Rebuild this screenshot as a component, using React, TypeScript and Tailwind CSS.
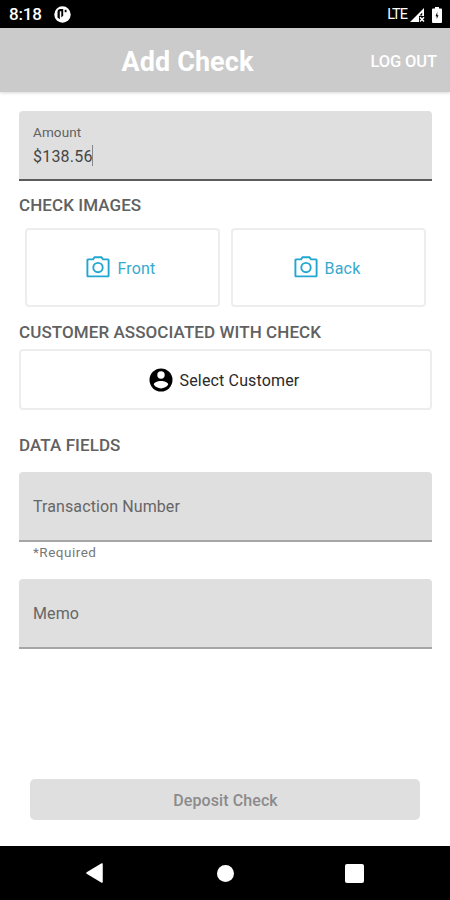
import type { ReactNode } from "react";

function StatusBar() {
  return (
    <div className="flex h-[28px] shrink-0 items-center bg-black pr-2 pl-[9px] text-white">
      <span className="w-[45px] text-[17px] leading-5 font-medium tracking-[-0.2px]">8:18</span>
      <svg className="mt-[1px] h-[17px] w-[17px]" viewBox="0 0 17 17">
        <circle cx="8.500" cy="8.500" r="8.200" fill="#fff" />
        <path d="M9.200 3H6.500a3 3 0 0 0-3 3v5.500l2.300 1.700V5.300h1.500v6.200l1.900-1.700z" fill="#000" />
        <path d="M10.700 3.800h1.800v2.400h-1.800z" fill="#000" />
      </svg>
      <span className="mt-[2px] ml-auto text-[14.500px] leading-5 tracking-[-1px]">LTE</span>
      <svg className="mt-[1px] ml-[3px] h-[14px] w-[15px]" viewBox="0 0 15 14">
        <path d="M14 0v8H9v6H0z" fill="#fff" />
        <path d="M12.200 4.500v3H9.500z" fill="#000" />
        <path d="M10 9.300l4 4.200M14 9.300l-4 4.200" stroke="#fff" strokeWidth="1.5" />
      </svg>
      <svg className="mt-[1px] ml-[7px] h-[16px] w-[10px]" viewBox="0 0 10 16">
        <path d="M3 0h4v1.600h2a1 1 0 0 1 1 1V15a1 1 0 0 1-1 1H1a1 1 0 0 1-1-1V2.600a1 1 0 0 1 1-1h2z" fill="#fff" />
        <path d="M5.300 5v3.300h1.200L4.700 12V9.300H3.500z" fill="#000" />
      </svg>
    </div>
  );
}

function CameraIcon() {
  return (
    <svg className="h-[22px] w-6" viewBox="0 0 24 22" fill="none" stroke="#22a7d0" strokeWidth="1.9">
      <path d="M2 3.400H7L8.600 1.200h6.800L17 3.400h5a.6.6 0 0 1 .6.6v15.800a.6.6 0 0 1-.6.6H2a.6.6 0 0 1-.6-.6V4a.6.6 0 0 1 .6-.6z" />
      <circle cx="12" cy="11.600" r="4.700" />
    </svg>
  );
}

function ImageButton({ label }: { label: string }) {
  return (
    <button className="flex h-[79px] flex-1 items-center justify-center gap-[7px] rounded-[4px] border-2 border-[#ededed] pr-[3px] pb-[2px] text-[16px] tracking-[0.2px] text-[#37a9d0]">
      <CameraIcon />
      <span className="mt-[4px]">{label}</span>
    </button>
  );
}

function SectionTitle({ children }: { children: ReactNode }) {
  return <h2 className="text-[17px] leading-5 font-medium tracking-[0.08px] text-[#616161]">{children}</h2>;
}

function Field({ label }: { label: string }) {
  return (
    <div className="flex h-[70px] items-center rounded-t-[4px] border-b-2 border-[#a6a6a6] bg-[#dfdfdf] px-[14px] pt-[2px] text-[16px] tracking-[0.1px] text-[#666]">
      {label}
    </div>
  );
}

export default function App() {
  return (
    <div className="flex h-[900px] w-[450px] flex-col overflow-hidden bg-white font-['Roboto',sans-serif]">
      <StatusBar />
      <header className="grid h-[64px] shrink-0 grid-cols-[1fr_auto_1fr] items-center bg-[#cbcbcb] text-white shadow-[0_1px_3px_rgba(0,0,0,0.16)]">
        <h1 className="col-start-2 mt-[3px] ml-[-75px] text-[27px] leading-8 font-bold tracking-[0.1px]">Add Check</h1>
        <button className="mt-[3px] justify-self-end pr-[13px] text-[16.5px] leading-5 font-medium tracking-[-0.1px]">LOG OUT</button>
      </header>

      <main className="flex flex-1 flex-col px-[19px] pt-[19px] pr-[18px]">
        <div className="flex h-[70px] flex-col rounded-t-[4px] border-b-2 border-[#5c5c5c] bg-[#dfdfdf] px-[14px] pt-[11px]">
          <span className="text-[13.500px] leading-5 tracking-[0.1px] text-[#626262]">Amount</span>
          <div className="mt-[3px] flex h-[21px] items-center text-[16px] tracking-[0.2px] text-[#454545]">
            <span className="mt-[2px]">$138.56</span>
            <span className="ml-[-1px] h-[21px] w-px bg-[#888]" />
          </div>
        </div>

        <div className="mt-[14px]">
          <SectionTitle>CHECK IMAGES</SectionTitle>
        </div>
        <div className="mt-[13px] flex gap-[11px] px-[6px]">
          <ImageButton label="Front" />
          <ImageButton label="Back" />
        </div>

        <div className="mt-[15px]">
          <SectionTitle>CUSTOMER ASSOCIATED WITH CHECK</SectionTitle>
        </div>
        <button className="mt-[7px] flex h-[61px] shrink-0 items-center justify-center gap-[7px] rounded-[4px] border-2 border-[#ededed] pr-[3px] text-[16px] tracking-[0.150px] text-[#2a2a2a]">
          <svg className="h-6 w-6" viewBox="0 0 24 24">
            <circle cx="12" cy="12" r="11.500" fill="#000" />
            <circle cx="12" cy="7" r="3.700" fill="#fff" />
            <path d="M12 12.900c3.200 0 7.200 1.500 7.200 3.500a8.500 8.500 0 0 1-14.400 0c0-2 4-3.500 7.200-3.500z" fill="#fff" />
          </svg>
          <span className="mt-[2px]">Select Customer</span>
        </button>

        <div className="mt-[25px] mb-[17px]">
          <SectionTitle>DATA FIELDS</SectionTitle>
        </div>
        <Field label="Transaction Number" />
        <span className="px-[14px] text-[13.500px] leading-5 tracking-[0.500px] text-[#777]">*Required</span>
        <div className="mt-[17px]">
          <Field label="Memo" />
        </div>

        <button className="mt-auto mr-[12px] mb-[26px] ml-[11px] h-[41px] rounded-[5px] bg-[#dfdfdf] pt-[2px] pl-px text-[16px] font-medium tracking-[0.1px] text-[#8b8b8b]">
          Deposit Check
        </button>
      </main>

      <nav className="flex h-[54px] shrink-0 items-center bg-black pl-[86px]">
        <svg className="h-5 w-[17px]" viewBox="0 0 17 20">
          <path d="M1 10L16 1v18z" fill="#fff" stroke="#fff" strokeWidth="1.500" strokeLinejoin="round" />
        </svg>
        <span className="ml-[114px] h-[17px] w-[17px] rounded-full bg-white" />
        <span className="ml-[111px] h-[19px] w-[19px] rounded-[2px] bg-white" />
      </nav>
    </div>
  );
}
